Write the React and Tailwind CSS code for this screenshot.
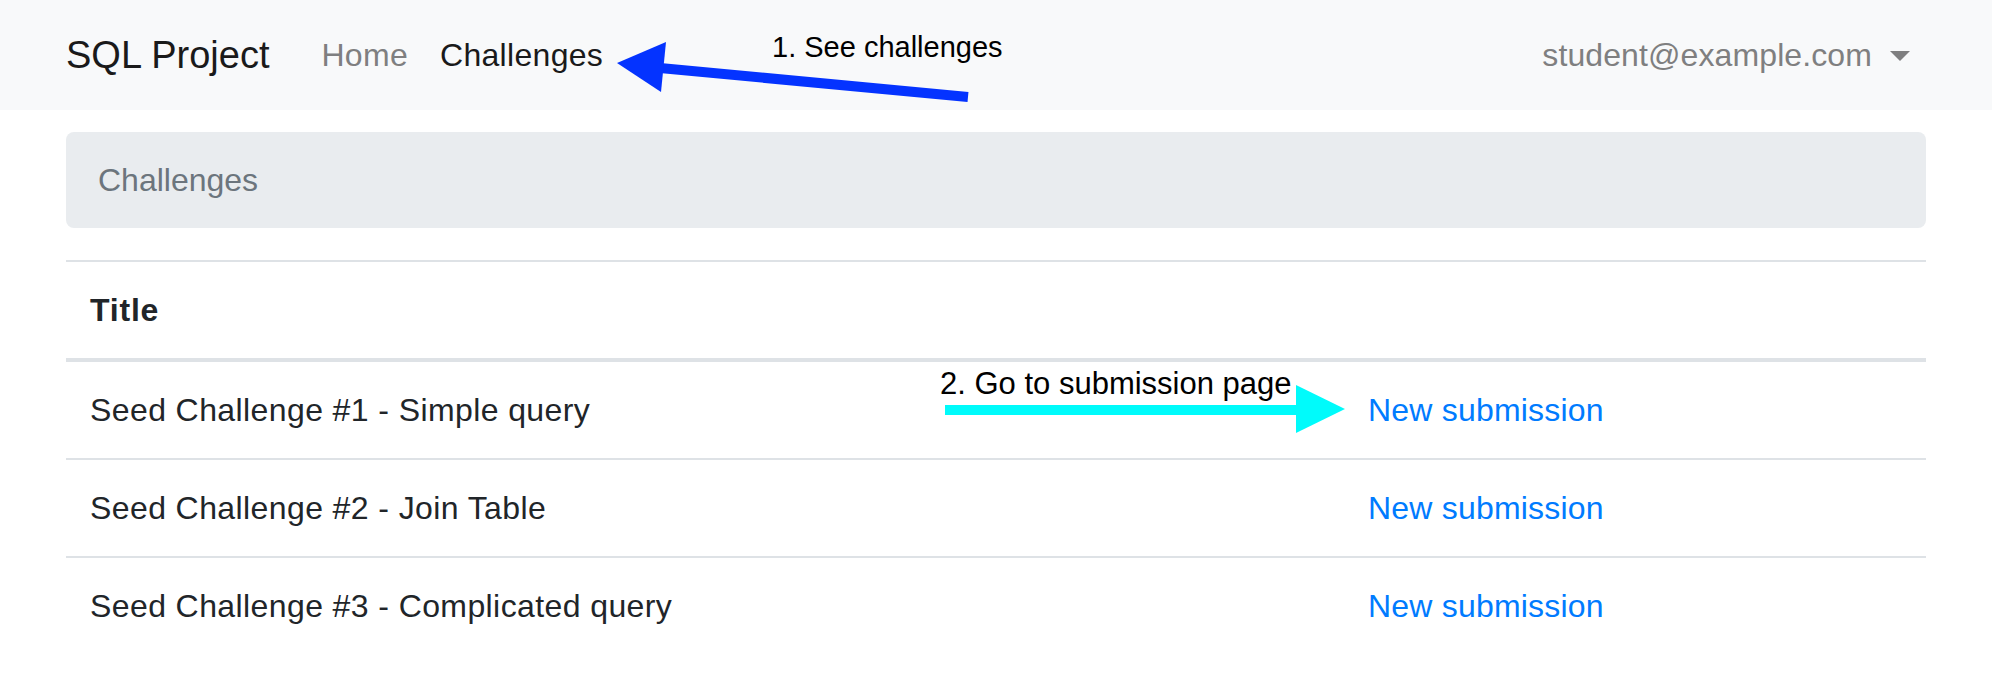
import React from "react";

const rows = [
  "Seed Challenge #1 - Simple query",
  "Seed Challenge #2 - Join Table",
  "Seed Challenge #3 - Complicated query",
];

function Annotations() {
  return (
    <>
      <svg
        className="absolute left-0 top-0 pointer-events-none"
        width="1992"
        height="684"
        viewBox="0 0 1992 684"
      >
        {/* 1. blue arrow pointing at Challenges */}
        <line x1="968" y1="97" x2="660" y2="68" stroke="#0433ff" strokeWidth="10" />
        <polygon points="617,63 666,42 661,92" fill="#0433ff" />
        {/* 2. cyan arrow pointing at New submission */}
        <rect x="945" y="405" width="354" height="10" fill="#00fbfb" />
        <polygon points="1296,385 1345,409 1296,433" fill="#00fbfb" />
      </svg>
      <div className="absolute left-[772px] top-[33px] text-[29px] leading-none text-black whitespace-nowrap">
        1. See challenges
      </div>
      <div className="absolute left-[940px] top-[368px] text-[31px] leading-none text-black whitespace-nowrap">
        2. Go to submission page
      </div>
    </>
  );
}

export default function App() {
  return (
    <div className="relative w-[1992px] h-[684px] overflow-hidden bg-white text-[#212529] font-['Liberation_Sans',Arial,sans-serif]">
      {/* navbar */}
      <nav className="h-[110px] bg-[#f8f9fa] flex items-center px-[66px]">
        <span className="text-[38px] leading-[60px] text-[#1a1a1a] mr-9">SQL Project</span>
        <a className="px-4 text-[32px] leading-[48px] tracking-[0.3px] text-[#7f7f80]">Home</a>
        <a className="px-4 text-[32px] leading-[48px] tracking-[0.3px] text-[#1a1a1a]">Challenges</a>
        <div className="ml-auto flex items-center pr-4 text-[32px] leading-[48px] tracking-[0.1px] text-[#7f7f80]">
          <span>student@example.com</span>
          <span className="ml-[18px] mt-[2px] w-0 h-0 border-x-[10px] border-x-transparent border-t-[10px] border-t-[#7f7f80]" />
        </div>
      </nav>

      <main className="px-[66px] pt-[22px]">
        <div className="bg-[#e9ecef] rounded-lg px-8 py-6 text-[32px] leading-[48px] text-[#6c757d] mb-8">
          Challenges
        </div>

        <table className="w-full table-fixed border-collapse text-[32px] leading-[48px] tracking-[0.4px]">
          <colgroup>
            <col className="w-[1278px]" />
            <col />
          </colgroup>
          <thead>
            <tr>
              <th className="p-6 text-left font-bold tracking-[0.8px] border-t-2 border-b-4 border-[#dee2e6]">Title</th>
              <th className="p-6 border-t-2 border-b-4 border-[#dee2e6]"></th>
            </tr>
          </thead>
          <tbody>
            {rows.map((title) => (
              <tr key={title}>
                <td className="p-6 border-t-2 border-[#dee2e6]">{title}</td>
                <td className="p-6 border-t-2 border-[#dee2e6] tracking-[0.2px]">
                  <a className="text-[#007bff]">New submission</a>
                </td>
              </tr>
            ))}
          </tbody>
        </table>
      </main>

      <Annotations />
    </div>
  );
}
